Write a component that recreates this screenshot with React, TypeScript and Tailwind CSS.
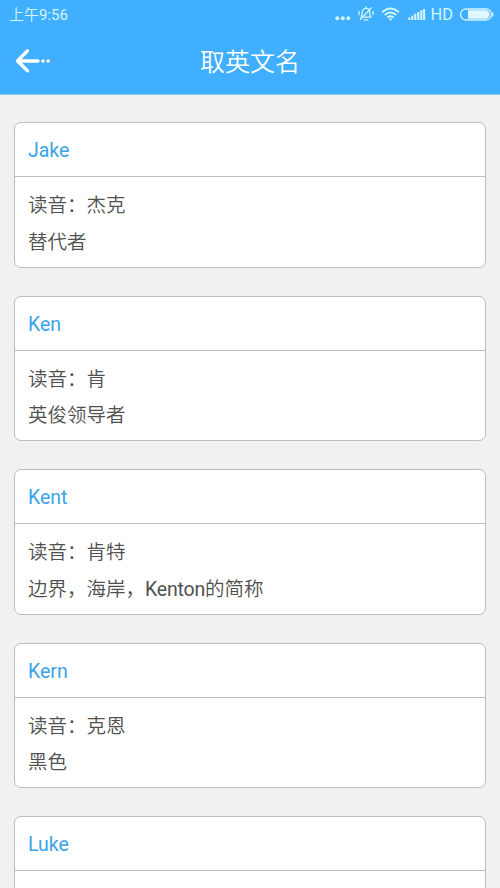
interface NameItem {
    name: string
    reading?: string
    meaning?: string
}

const names: NameItem[] = [
    { name: "Jake", reading: "杰克", meaning: "替代者" },
    { name: "Ken", reading: "肯", meaning: "英俊领导者" },
    { name: "Kent", reading: "肯特", meaning: "边界，海岸，Kenton的简称" },
    { name: "Kern", reading: "克恩", meaning: "黑色" },
    { name: "Luke" },
];

const StatusBar: React.FC = () => {
    return (
        <div className="flex h-[29px] items-center justify-between pl-[9px] pr-[2px] text-[#d3f6ff]">
            <p className="pt-[2px] text-[15px] font-[350] leading-[29px]">上午<span className="font-normal">9:56</span></p>
            <div className="flex h-full items-center">
                <svg className="h-[29px] w-[164px]" viewBox="334 0 164 29" fill="none" stroke="currentColor">
                    {/* more dots */}
                    <g fill="currentColor" stroke="none">
                        <circle cx="337.3" cy="18.2" r="2" />
                        <circle cx="342.8" cy="18.2" r="2" />
                        <circle cx="348.3" cy="18.2" r="2" />
                    </g>
                    {/* muted bell */}
                    <g strokeWidth="1.3" strokeLinecap="round" strokeLinejoin="round">
                        <path d="M361 17.2c1-1 1.2-2 1.2-4.2 0-2.8 1.5-4.6 3.8-4.6s3.8 1.8 3.8 4.6c0 2.2.2 3.2 1.2 4.2z" />
                        <path d="M364.3 19.9h3.4M366 7v1.4M360.3 19.5L371.6 7.6" />
                        <path d="M359 11.5v3M373 11.5v3" />
                    </g>
                    {/* wifi */}
                    <g strokeWidth="1.9">
                        <path d="M382.2 12.2q8.3-7.2 16.6 0" />
                        <path d="M384.8 14.9q5.7-4.8 11.4 0" />
                        <path d="M387.3 17.4q3.2-2.5 6.4 0" />
                        <circle cx="390.5" cy="19.2" r="1.2" fill="currentColor" stroke="none" />
                    </g>
                    {/* signal */}
                    <path strokeWidth="2.1" d="M409.3 20v-2.6M412.3 20v-4.2M415.3 20v-6.2M418.3 20v-8M421.3 20v-9.8M424.1 20V9" />
                    <text x="430.6" y="20.4" fontSize="16.2" fill="currentColor" stroke="none" textLength="22.4" lengthAdjust="spacingAndGlyphs">HD</text>
                    {/* battery */}
                    <rect x="460.5" y="9" width="31" height="11" rx="5.5" strokeWidth="1.3" />
                    <path d="M468 10.3h17.5a4.2 4.2 0 0 1 0 8.4H468z" fill="#e3f7ff" stroke="none" />
                    <path d="M492.9 12.5v4" strokeWidth="1.2" />
                </svg>
            </div>
        </div>
    )
}

const Header: React.FC = () => {
    return (
        <div className="grid h-[66px] grid-cols-3 items-center border-b border-[#8ccdf5]">
            <svg className="mb-[2px] ml-[14px] h-[28px] w-[40px]" viewBox="14 47 40 28" fill="none" stroke="white" strokeWidth="3.4" strokeLinecap="round" strokeLinejoin="round">
                <path d="M27.5 50.8L17.5 61l10 9.8M18 61h20" />
                <g fill="white" stroke="none">
                    <circle cx="43" cy="61" r="1.8" />
                    <circle cx="48.2" cy="61" r="1.8" />
                </g>
            </svg>
            <h1 className="pt-[3px] text-center text-[25px] font-[350] leading-[36px] text-white">取英文名</h1>
        </div>
    )
}

const NameCard: React.FC<{ item: NameItem }> = ({ item }) => {
    return (
        <div className="h-[145.5px] shrink-0 rounded-[7px] border border-[#bdbdbd] bg-white text-[19.5px]">
            <div className="flex h-[54px] items-center border-b border-[#bdbdbd] pl-[13px] pt-[3px] text-[#3ba3ea]">{item.name}</div>
            {item.reading &&
                <div className="pl-[13px] pt-[11px] font-[350] leading-[36.5px] text-[#505050]">
                    <p>读音：{item.reading}</p>
                    <p>
                        {/* latin words need the regular weight next to the thinner hanzi */}
                        {item.meaning?.split(/([A-Za-z]+)/).map((part, index) => (
                            index % 2 ? <span className="font-normal tracking-[-0.01em]" key={index}>{part}</span> : part
                        ))}
                    </p>
                </div>
            }
        </div>
    )
}

export default function App() {
    return (
        <div className="h-[888px] overflow-hidden bg-[#f1f1f1] font-['Roboto','Noto_Sans_CJK_SC',sans-serif]">
            <div className="bg-[#40afff]">
                <StatusBar />
                <Header />
            </div>
            <div className="flex flex-col gap-[28px] px-[14px] pt-[27px]">
                {names.map((item) => (
                    <NameCard item={item} key={item.name} />
                ))}
            </div>
        </div>
    )
}
